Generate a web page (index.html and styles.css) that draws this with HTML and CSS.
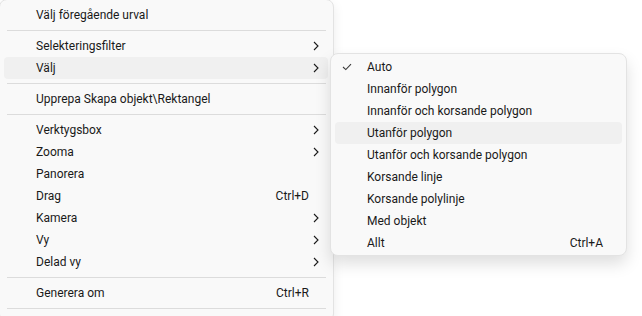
FILE: index.html
```html
<!DOCTYPE html>
<html>
<head>
    <title>Meny</title>
    <link rel="stylesheet" href="styles.css">
</head>
<body>
    <div class="menu main-menu">
        <div class="item"><span class="label">Välj föregående urval</span></div>
        <div class="sep"></div>
        <div class="item"><span class="label">Selekteringsfilter</span><svg class="arrow" width="6" height="10" viewBox="0 0 6 10"><path d="M1 1 L5 5 L1 9"/></svg></div>
        <div class="item hover"><span class="label">Välj</span><svg class="arrow" width="6" height="10" viewBox="0 0 6 10"><path d="M1 1 L5 5 L1 9"/></svg></div>
        <div class="sep"></div>
        <div class="item"><span class="label">Upprepa Skapa objekt\Rektangel</span></div>
        <div class="sep"></div>
        <div class="item"><span class="label">Verktygsbox</span><svg class="arrow" width="6" height="10" viewBox="0 0 6 10"><path d="M1 1 L5 5 L1 9"/></svg></div>
        <div class="item"><span class="label">Zooma</span><svg class="arrow" width="6" height="10" viewBox="0 0 6 10"><path d="M1 1 L5 5 L1 9"/></svg></div>
        <div class="item"><span class="label">Panorera</span></div>
        <div class="item"><span class="label">Drag</span><span class="key">Ctrl+D</span></div>
        <div class="item"><span class="label">Kamera</span><svg class="arrow" width="6" height="10" viewBox="0 0 6 10"><path d="M1 1 L5 5 L1 9"/></svg></div>
        <div class="item"><span class="label">Vy</span><svg class="arrow" width="6" height="10" viewBox="0 0 6 10"><path d="M1 1 L5 5 L1 9"/></svg></div>
        <div class="item"><span class="label">Delad vy</span><svg class="arrow" width="6" height="10" viewBox="0 0 6 10"><path d="M1 1 L5 5 L1 9"/></svg></div>
        <div class="sep"></div>
        <div class="item"><span class="label">Generera om</span><span class="key">Ctrl+R</span></div>
        <div class="sep"></div>
    </div>

    <!-- undermeny for "Välj" -->
    <div class="menu sub-menu">
        <div class="item checked">
            <svg class="check" width="10" height="8" viewBox="0 0 10 8"><path d="M1 4 L3.8 6.6 L9 1.2"/></svg>
            <span class="label">Auto</span>
        </div>
        <div class="item"><span class="label">Innanför polygon</span></div>
        <div class="item"><span class="label">Innanför och korsande polygon</span></div>
        <div class="item hover"><span class="label">Utanför polygon</span></div>
        <div class="item"><span class="label">Utanför och korsande polygon</span></div>
        <div class="item"><span class="label">Korsande linje</span></div>
        <div class="item"><span class="label">Korsande polylinje</span></div>
        <div class="item"><span class="label">Med objekt</span></div>
        <div class="item"><span class="label">Allt</span><span class="key">Ctrl+A</span></div>
    </div>
</body>
</html>
```

FILE: styles.css
```css
body {
    margin: 0;
    background-color: #ffffff;
    font-family: Roboto, 'Noto Sans', sans-serif;
    font-size: 12px;
    color: #1a1a1a;
    overflow: hidden;
    height: 316px;
}

.menu {
    box-sizing: border-box;
    background-color: #f9f9f9;
    border: 1px solid #e3e3e3;
    border-radius: 8px;
}

.main-menu {
    width: 335px;
    margin-left: -1px;
    margin-top: -1px;
    padding: 4px 5px 8px 4px;
    box-shadow: 0 4px 12px rgba(0, 0, 0, 0.08);
}

.sub-menu {
    position: absolute;
    left: 330px;
    top: 53px;
    width: 297px;
    padding: 2px 4px 1px 4px;
    box-shadow: 0 8px 16px rgba(0, 0, 0, 0.13);
}

.item {
    position: relative;
    display: flex;
    align-items: center;
    height: 22px;
    padding-left: 32px;
    border-radius: 4px;
}

.item.hover {
    background-color: #f0f0f0;
}

.label {
    flex: 1;
    white-space: nowrap;
}

.key {
    padding-right: 19px;
}

.arrow {
    margin-right: 9px;
    fill: none;
    stroke: #1a1a1a;
    stroke-width: 1.1;
}

.check {
    position: absolute;
    left: 7px;
    top: 7px;
    fill: none;
    stroke: #3a3a3a;
    stroke-width: 1.1;
}

.sep {
    height: 1px;
    margin: 4px 2px 4px 3px;
    background-color: #dcdcdc;
}
```
